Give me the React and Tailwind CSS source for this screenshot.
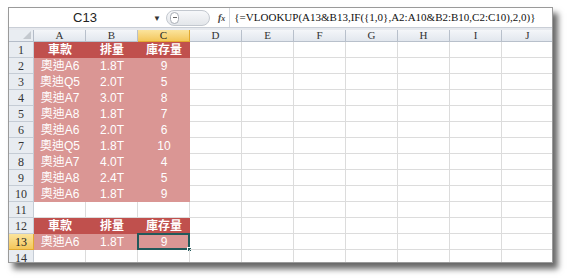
const cols = ["A", "B", "C", "D", "E", "F", "G", "H", "I", "J"];

const data = [
  ["奧迪A6", "1.8T", "9"],
  ["奧迪Q5", "2.0T", "5"],
  ["奧迪A7", "3.0T", "8"],
  ["奧迪A8", "1.8T", "7"],
  ["奧迪A6", "2.0T", "6"],
  ["奧迪Q5", "1.8T", "10"],
  ["奧迪A7", "4.0T", "4"],
  ["奧迪A8", "2.4T", "5"],
  ["奧迪A6", "1.8T", "9"],
];

const head = ["車款", "排量", "庫存量"];

const serif = { fontFamily: '"Liberation Serif", "Noto Serif CJK TC", serif' };
const sans = { fontFamily: '"Liberation Sans", "Noto Sans CJK TC", sans-serif' };

function rowContent(r) {
  if (r === 1 || r === 12) return { vals: head, kind: "head" };
  if (r >= 2 && r <= 10) return { vals: data[r - 2], kind: "data" };
  if (r === 13) return { vals: ["奧迪A6", "1.8T", "9"], kind: "data" };
  return { vals: [], kind: "empty" };
}

const Cell = ({ r, c, value, kind }) => {
  const filled = kind !== "empty" && c < 3;
  const selected = r === 13 && c === 2;
  let cls = "relative flex items-center justify-center text-[12px] text-white leading-none ";
  if (filled && kind === "head") cls += "bg-[#c0504d] font-bold";
  else if (filled) cls += "bg-[#da9694]";
  else cls += "border-r border-b border-[#dcdcdc]";
  return (
    <div className={cls} style={sans}>
      {filled ? value : null}
      {selected && (
        <>
          <div className="absolute -left-[1px] -top-[1px] right-0 bottom-0 border-2 border-[#21595a]" />
          <div className="absolute -right-[2px] -bottom-[2px] w-[5px] h-[5px] bg-[#21595a] border border-white" />
        </>
      )}
    </div>
  );
};

export default function App() {
  const rows = Array.from({ length: 14 }, (_, i) => i + 1);
  return (
    <div className="w-[567px] h-[278px] bg-white pl-[8px] pt-[7px] overflow-hidden">
      <div className="w-[545px] h-[256px] bg-white border border-[#9a9a9a] shadow-[5px_6px_6px_rgba(0,0,0,0.6)] overflow-hidden flex flex-col">
        {/* formula bar */}
        <div className="h-[20px] flex items-center border-b border-[#c9ced6] shrink-0">
          <div className="w-[152px] h-full flex items-center justify-center relative">
            <span className="text-[13px] text-[#222]" style={sans}>C13</span>
            <span className="absolute right-[0px] top-[4px] text-[8px] text-[#333]">▼</span>
          </div>
          <div className="ml-[5px] w-[44px] h-[16px] rounded-full border border-[#c3c8cf] bg-gradient-to-b from-[#f7f8fa] to-[#e3e6ea] flex items-center pl-[3px]">
            <div className="w-[9px] h-[12px] rounded-full border border-[#a8adb5] bg-white flex items-center justify-center">
              <div className="w-[4px] h-[1px] bg-[#666]" />
            </div>
          </div>
          <span className="ml-[8px] italic font-bold text-[10px] text-[#444]" style={serif}>
            f<span className="text-[8px]">x</span>
          </span>
          <div className="ml-[4px] h-full border-l border-[#d4d8de]" />
          <span className="ml-[4px] text-[11px] text-[#111] whitespace-nowrap" style={serif}>
            {"{=VLOOKUP(A13&B13,IF({1,0},A2:A10&B2:B10,C2:C10),2,0)}"}
          </span>
        </div>
        <div className="h-[2px] bg-[#e6e9ee] shrink-0" />
        {/* grid */}
        <div className="grid grid-cols-[25px_repeat(10,52px)] grid-rows-[12px_repeat(14,16px)]">
          <div className="relative bg-[#e9edf2] border-r border-b border-[#b4bcc8]">
            <div className="absolute right-[2px] bottom-[2px] w-0 h-0 border-l-[8px] border-l-transparent border-b-[8px] border-b-[#c4c9cf]" />
          </div>
          {cols.map((c, i) => (
            <div
              key={c}
              className={
                "flex items-center justify-center text-[11px] leading-none border-r border-b " +
                (i === 2
                  ? "bg-gradient-to-b from-[#fbe49c] to-[#f3c659] border-[#e2a92f] text-[#222]"
                  : "bg-gradient-to-b from-[#f4f6f9] to-[#e2e7ee] border-[#b8c0cb] text-[#333]")
              }
              style={serif}
            >
              {c}
            </div>
          ))}
          {rows.map((r) => {
            const { vals, kind } = rowContent(r);
            return [
              <div
                key={"h" + r}
                className={
                  "flex items-center justify-center text-[12px] leading-none border-r border-b " +
                  (r === 13
                    ? "bg-gradient-to-b from-[#fbe49c] to-[#f3c659] border-[#e2a92f] text-[#222]"
                    : "bg-[#e8ecf1] border-[#c5ccd5] text-[#333]")
                }
                style={serif}
              >
                {r}
              </div>,
              ...cols.map((c, ci) => (
                <Cell key={r + c} r={r} c={ci} value={vals[ci]} kind={kind} />
              )),
            ];
          })}
        </div>
      </div>
    </div>
  );
}
